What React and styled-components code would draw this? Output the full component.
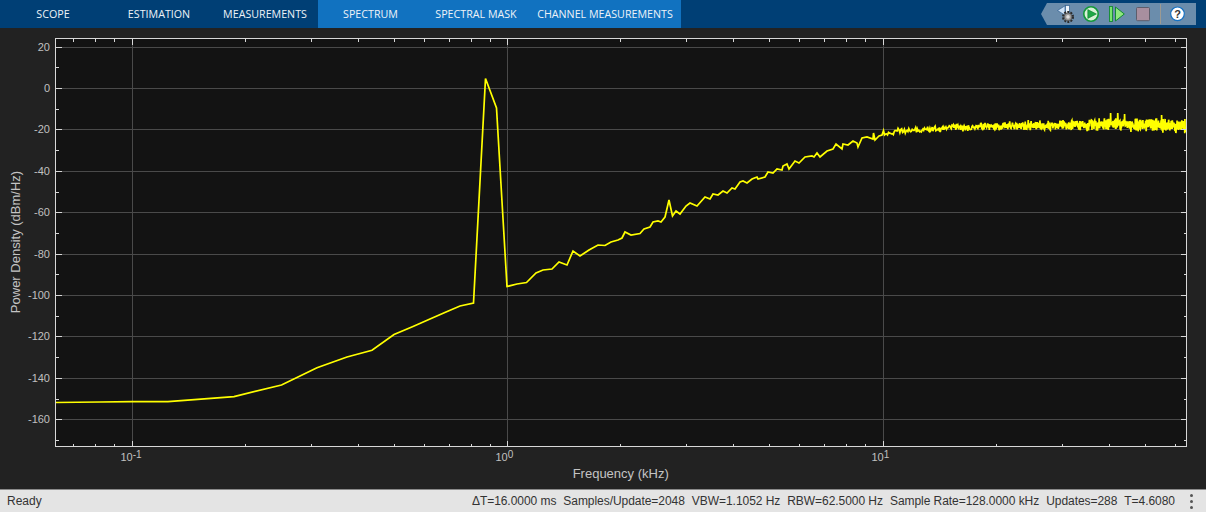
import React from 'react';
import styled, { createGlobalStyle } from 'styled-components';

const Global = createGlobalStyle`
  html, body { margin: 0; padding: 0; background: #222; }
  #root { width: 1206px; height: 512px; overflow: hidden; }
`;
const Page = styled.div`
  width: 1206px; height: 512px; display: flex; flex-direction: column; background: #222222;
`;
const Strip = styled.header`
  height: 28px; flex: none; display: flex; align-items: stretch; justify-content: space-between;
  background: #003f75; padding-right: 10px;
`;
const Tabs = styled.nav`
  display: flex; align-items: stretch;
`;
const TabGroup = styled.div`
  display: flex; align-items: stretch; background: ${p => (p.$active ? '#1172c0' : 'transparent')};
`;
const Tab = styled.div`
  width: ${p => p.$w}px; display: flex; align-items: center; justify-content: center;
  color: #eef3f8; font: 10.7px "Open Sans", sans-serif; white-space: nowrap; padding-bottom: 1px;
`;
const Tools = styled.div`
  width: 155px; height: 22px; margin-top: 3px; background: #6b8dac; display: flex; align-items: center;
  clip-path: polygon(6px 0, 100% 0, 100% 100%, 6px 100%, 0 50%);
`;
const ChartArea = styled.main`
  flex: 1; min-height: 0; display: block;
`;
const ChartSvg = styled.svg`
  display: block;
`;
const ToolSvg = styled.svg`
  display: block;
`;
const Status = styled.footer`
  height: 23px; flex: none; box-sizing: border-box; border-top: 1px solid #8a8a8a; background: #e4e4e4;
  display: flex; align-items: center; justify-content: space-between; padding: 0 13px 0 7px;
  color: #333; font: 12px "Liberation Sans", Arial, sans-serif;
`;
const StatusRight = styled.div`
  display: flex; align-items: center;
`;
const Stat = styled.span`
  margin-left: 7px; white-space: nowrap; letter-spacing: -0.05px;
`;
const Dots = styled.span`
  display: flex; flex-direction: column; gap: 3px; margin-left: 15px;
  i { width: 3px; height: 3px; background: #555; border-radius: 50%; display: block; }
`;

const L = 55.5, R = 1186.5, T = 38.5, B = 446.5;
const xd = d => 507 + 375.5 * d;
const yRow = v => Math.round(88 - v * 2.07);

const handPoints = [
  [55, 402.5], [100, 402], [132, 401.7], [167.9, 401.6], [234, 396.6], [281.5, 385], [317, 367.8], [347, 357], [372, 350.2], [394, 334.5],
  [413, 326.5], [430, 319], [446, 312], [460, 306], [473.5, 303], [485.5, 78.5], [496.5, 108], [507, 286.5], [517, 284], [526.5, 282.5],
  [536, 273], [543, 270], [552, 269], [559, 262], [567, 265], [573, 251], [580, 256], [589, 250], [598, 245], [605, 245.5],
  [611, 242], [618, 240], [622, 238], [625, 232], [631, 235], [640, 233.5], [644, 229], [650, 227], [653, 222], [658, 221],
  [661, 222], [665, 217], [669, 200], [672.5, 216], [676, 211], [680, 214], [686, 206], [690, 203], [697, 206], [705, 197],
  [710, 199], [713, 194], [718, 195], [723, 191], [727, 193], [732, 188], [735, 189], [740, 182], [743, 181], [747, 183],
  [752, 179], [757, 177], [758, 179], [765, 177], [768, 172], [773, 173], [777, 169], [782, 170], [783, 166], [787, 164],
  [789, 169], [795, 161], [799, 163], [805, 157], [812, 156], [814, 157], [817, 153], [820, 157], [827, 151], [833, 149],
  [836, 144], [842, 149], [843, 144], [848, 145], [853, 141], [857, 143], [858, 147], [862, 138], [867, 137], [873, 139],
  [873.5, 133], [875, 140], [879, 136], [882, 135],
];
const centers = [[883, 134.5], [900, 130.5], [950, 128], [1000, 126], [1050, 125], [1100, 124.5], [1150, 125], [1186, 125.5]];
const centerAt = x => {
  for (let i = 0; i < centers.length - 1; i++) {
    const [a, b] = centers[i], [c, d] = centers[i + 1];
    if (x <= c) return b + ((d - b) * (x - a)) / (c - a);
  }
  return 125;
};
const spikes = { 1111: 113, 1118: 113, 1125: 114, 1162: 115 };
const tracePoints = () => {
  let s = 12345;
  const rnd = () => { s = (s * 1664525 + 1013904223) % 4294967296; return s / 4294967296; };
  const pts = [...handPoints];
  const seen = {};
  for (let k = 161; k <= 1024; k++) {
    const x = xd(Math.log10(k * 0.0625));
    const t = (x - 883) / 303;
    const amp = 2.6 + 2.8 * t;
    let y = centerAt(x) + (rnd() + rnd() - 1) * amp * 1.5;
    const px = Math.round(x);
    if (spikes[px] && !seen[px]) { y = spikes[px]; seen[px] = 1; }
    pts.push([x, y]);
  }
  pts[pts.length - 1][1] = 132;
  return pts.map(p => `${p[0].toFixed(2)},${p[1].toFixed(2)}`).join(' ');
};

const xMajor = [-1, 0, 1];
const xMinor = [];
for (let dec = -2; dec <= 1; dec++) {
  for (let m = 2; m <= 9; m++) {
    const x = xd(dec + Math.log10(m));
    if (x > L && x < R) xMinor.push(x);
  }
}
const yMajor = [20, 0, -20, -40, -60, -80, -100, -120, -140, -160];
const yMinor = [10, -10, -30, -50, -70, -90, -110, -130, -150, -170];

const tickLabel = { fill: '#c0c0c0', fontFamily: '"Liberation Sans", Arial, sans-serif', fontSize: 11 };
const axisLabel = { fill: '#c4c4c4', fontFamily: '"Liberation Sans", Arial, sans-serif', fontSize: 13 };

function Chart() {
  return (
    <ChartSvg width="1206" height="461" viewBox="0 28 1206 461">
      <rect x={L} y={T} width={R - L} height={B - T} fill="#131313" />
      <g stroke="#4a4a4a" strokeWidth="1" shapeRendering="crispEdges">
        {yMajor.map(v => <line key={v} x1={L} x2={R} y1={yRow(v) + 0.5} y2={yRow(v) + 0.5} />)}
        {xMajor.map(d => <line key={d} y1={T} y2={B} x1={Math.round(xd(d)) + 0.5} x2={Math.round(xd(d)) + 0.5} />)}
      </g>
      <clipPath id="plot"><rect x={L} y={T} width={R - L} height={B - T} /></clipPath>
      <polyline clipPath="url(#plot)" points={tracePoints()} fill="none" stroke="#ffff00" strokeWidth="1.7" strokeLinejoin="miter" />
      <g stroke="#d8d8d8" strokeWidth="1" shapeRendering="crispEdges">
        {yMajor.map(v => {
          const y = yRow(v) + 0.5;
          return <g key={v}><line x1={L} x2={L + 6} y1={y} y2={y} /><line x1={R - 6} x2={R} y1={y} y2={y} /></g>;
        })}
        {yMinor.map(v => {
          const y = yRow(v) + 0.5;
          return <g key={v}><line x1={L} x2={L + 3} y1={y} y2={y} /><line x1={R - 3} x2={R} y1={y} y2={y} /></g>;
        })}
        {xMajor.map(d => {
          const x = Math.round(xd(d)) + 0.5;
          return <g key={d}><line x1={x} x2={x} y1={T} y2={T + 6} /><line x1={x} x2={x} y1={B - 6} y2={B} /></g>;
        })}
        {xMinor.map(v => {
          const x = Math.round(v) + 0.5;
          return <g key={v}><line x1={x} x2={x} y1={T} y2={T + 3} /><line x1={x} x2={x} y1={B - 3} y2={B} /></g>;
        })}
        <rect x={L} y={T} width={R - L} height={B - T} fill="none" />
      </g>
      {yMajor.map(v => (
        <text key={v} x={50} y={yRow(v) + 4} textAnchor="end" {...tickLabel}>{v}</text>
      ))}
      {xMajor.map(d => (
        <text key={d} x={Math.round(xd(d)) - 11.5} y={461} {...tickLabel}>
          10
          <tspan dy="-3" fontSize="10">{d}</tspan>
        </text>
      ))}
      <text x={620.7} y={478} textAnchor="middle" {...axisLabel}>Frequency (kHz)</text>
      <text transform="translate(20 242) rotate(-90)" textAnchor="middle" {...axisLabel}>Power Density (dBm/Hz)</text>
    </ChartSvg>
  );
}

function ToolIcons() {
  return (
    <ToolSvg width="155" height="22" viewBox="0 0 155 22">
      {/* drive-mode arrow with gear */}
      <path d="M16.5 7.5 L24 2.8 V12.2 Z" fill="#cfe3f7" stroke="#2f5f8f" strokeWidth=".7" />
      <rect x="24.5" y="2.5" width="4" height="9" fill="#eef5fb" stroke="#2f5f8f" strokeWidth=".7" />
      <g transform="translate(27 13.9)">
        <circle r="4.8" fill="none" stroke="#2b2b2b" strokeWidth="2.4" strokeDasharray="1.9 1.15" />
        <circle r="3.9" fill="#9a9a9a" stroke="#3a3a3a" strokeWidth=".6" />
        <circle r="1.8" fill="#dedede" />
      </g>
      {/* run */}
      <circle cx="50" cy="11" r="7.2" fill="#d9f2d6" stroke="#14993a" strokeWidth="1.6" />
      <path d="M46.8 6.6 L55.4 11 L46.8 15.4 Z" fill="#1fa846" stroke="#0f7f30" strokeWidth=".6" />
      {/* step */}
      <rect x="68.5" y="3.5" width="3" height="15" fill="#79e36e" stroke="#128a33" strokeWidth=".9" />
      <path d="M74.5 4 L83.3 11 L74.5 18 Z" fill="#8fe77f" stroke="#128a33" strokeWidth="1" />
      {/* stop */}
      <rect x="95.5" y="4.5" width="13" height="13.2" rx="1" fill="#a88f9f" stroke="#5d5d6b" strokeWidth="1" />
      {/* separator */}
      <rect x="119" y="1" width="1" height="20" fill="#9c9a92" />
      {/* help */}
      <circle cx="136.5" cy="10.8" r="6.8" fill="#ffffff" stroke="#1572c4" strokeWidth="1.2" />
      <text x="136.5" y="14.8" textAnchor="middle" fontFamily='"Liberation Sans", Arial, sans-serif' fontWeight="700" fontSize="11" fill="#333">?</text>
    </ToolSvg>
  );
}

const stats = [
  'ΔT=16.0000 ms', 'Samples/Update=2048', 'VBW=1.1052 Hz', 'RBW=62.5000 Hz',
  'Sample Rate=128.0000 kHz', 'Updates=288', 'T=4.6080',
];

export default function App() {
  return (
    <Page>
      <Global />
      <Strip>
        <Tabs>
          <TabGroup>
            <Tab $w={106}>SCOPE</Tab>
            <Tab $w={106}>ESTIMATION</Tab>
            <Tab $w={106}>MEASUREMENTS</Tab>
          </TabGroup>
          <TabGroup $active>
            <Tab $w={105}>SPECTRUM</Tab>
            <Tab $w={106}>SPECTRAL MASK</Tab>
            <Tab $w={152}>CHANNEL MEASUREMENTS</Tab>
          </TabGroup>
        </Tabs>
        <Tools><ToolIcons /></Tools>
      </Strip>
      <ChartArea><Chart /></ChartArea>
      <Status>
        <span>Ready</span>
        <StatusRight>
          {stats.map(s => <Stat key={s}>{s}</Stat>)}
          <Dots><i /><i /><i /></Dots>
        </StatusRight>
      </Status>
    </Page>
  );
}
